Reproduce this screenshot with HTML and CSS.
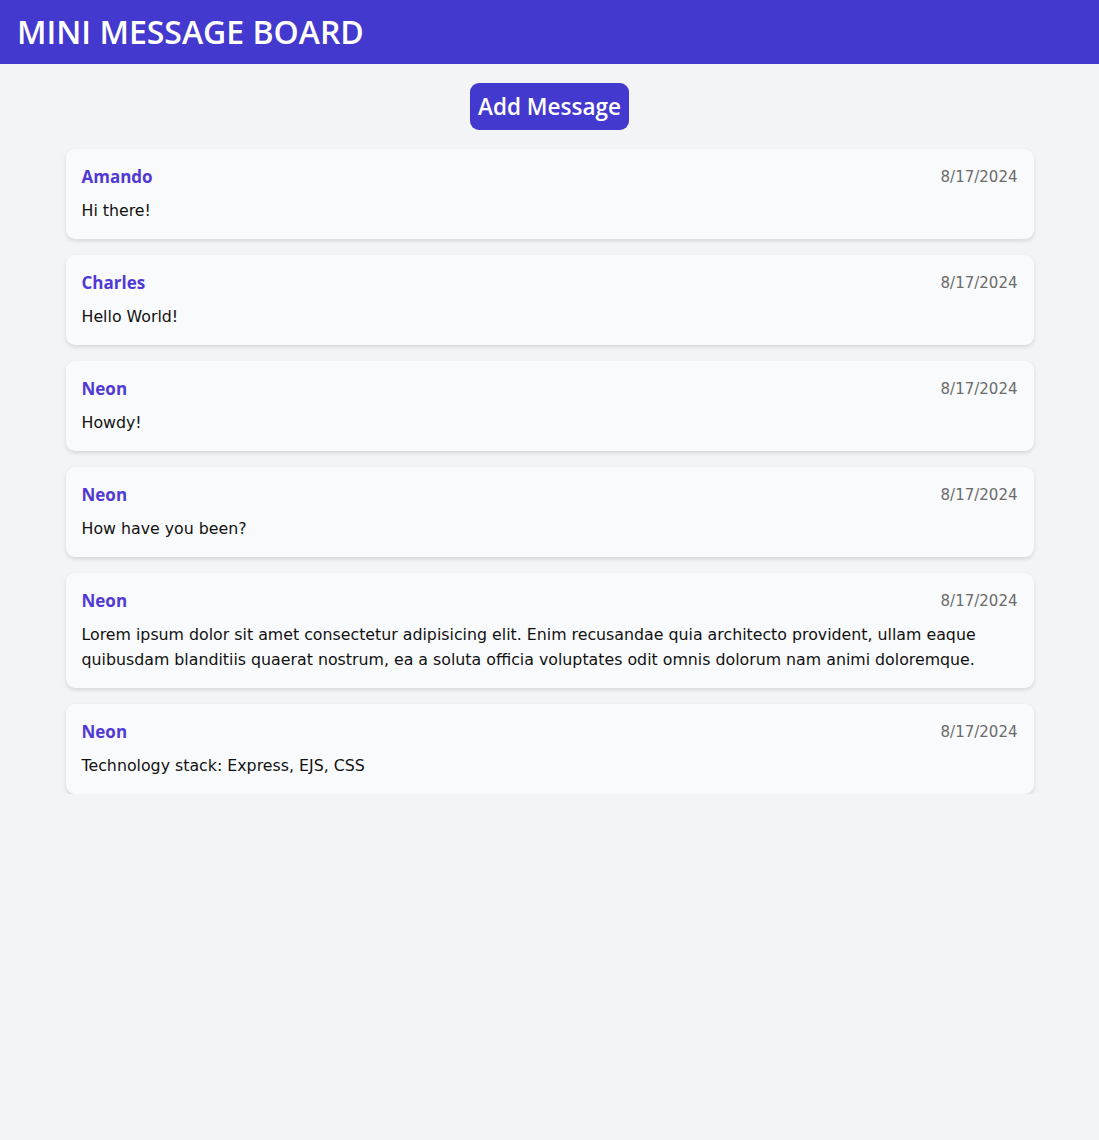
FILE: index.html
```html
<!DOCTYPE html>
<html lang="en">
<head>
<meta charset="utf-8">
<title>Mini Message Board</title>
<link rel="stylesheet" href="styles.css">
</head>
<body>
<header class="topbar">
  <h1 class="title">MINI MESSAGE BOARD</h1>
</header>
<main class="main">
  <a class="add-btn" href="#">Add Message</a>
  <ul class="messages">
    <li class="card">
      <div class="card-head"><span class="user">Amando</span><span class="date">8/17/2024</span></div>
      <p class="text">Hi there!</p>
    </li>
    <li class="card">
      <div class="card-head"><span class="user">Charles</span><span class="date">8/17/2024</span></div>
      <p class="text">Hello World!</p>
    </li>
    <li class="card">
      <div class="card-head"><span class="user">Neon</span><span class="date">8/17/2024</span></div>
      <p class="text">Howdy!</p>
    </li>
    <li class="card">
      <div class="card-head"><span class="user">Neon</span><span class="date">8/17/2024</span></div>
      <p class="text">How have you been?</p>
    </li>
    <li class="card">
      <div class="card-head"><span class="user">Neon</span><span class="date">8/17/2024</span></div>
      <p class="text">Lorem ipsum dolor sit amet consectetur adipisicing elit. Enim recusandae quia architecto provident, ullam eaque quibusdam blanditiis quaerat nostrum, ea a soluta officia voluptates odit omnis dolorum nam animi doloremque.</p>
    </li>
    <li class="card">
      <div class="card-head"><span class="user">Neon</span><span class="date">8/17/2024</span></div>
      <p class="text">Technology stack: Express, EJS, CSS</p>
    </li>
  </ul>
</main>
</body>
</html>
```
FILE: styles.css
```css
* { box-sizing: border-box; }
body {
  margin: 0;
  background: #f3f4f6;
  font-family: "DejaVu Sans", "Open Sans", sans-serif;
  color: #111111;
}
.topbar {
  background: #4439ce;
  height: 64px;
  display: flex;
  align-items: center;
  padding: 0 17px;
}
.title {
  margin: 0;
  color: #ffffff;
  font-family: "Open Sans", "DejaVu Sans", sans-serif;
  font-size: 32px;
  font-weight: 600;
  line-height: 48px;
}
.main {
  display: flex;
  flex-direction: column;
  align-items: center;
  padding-top: 19px;
}
.add-btn {
  background: #4439ce;
  color: #ffffff;
  text-decoration: none;
  font-family: "Open Sans", "DejaVu Sans", sans-serif;
  font-size: 22.5px;
  font-weight: 600;
  line-height: 31px;
  padding: 8px 8px;
  border-radius: 9px;
}
.messages {
  list-style: none;
  margin: 19px 0 0;
  padding: 0;
  width: 968px;
  display: flex;
  flex-direction: column;
  gap: 16px;
}
.card {
  background: #f9fafb;
  border-radius: 9px;
  padding: 16px;
  box-shadow: 0 2px 4px rgba(0, 0, 0, 0.12);
}
.card-head {
  display: flex;
  justify-content: space-between;
  align-items: center;
  height: 24px;
  margin-bottom: 9px;
}
.user {
  color: #5139d3;
  font-family: "Open Sans", "DejaVu Sans", sans-serif;
  font-weight: 700;
  font-size: 17px;
  line-height: 24px;
}
.date {
  color: #6b6b6b;
  font-size: 15px;
  line-height: 24px;
}
.text {
  margin: 0;
  font-size: 15.8px;
  line-height: 25px;
}
```
